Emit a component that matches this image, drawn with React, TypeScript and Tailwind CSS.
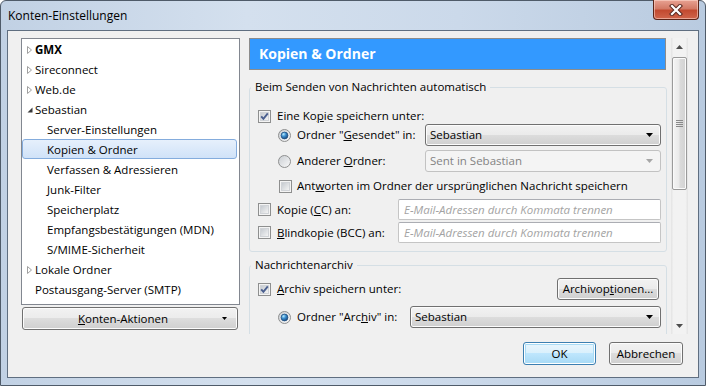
const btn =
  "flex items-center justify-center rounded-[3px] border border-[#707070] bg-[linear-gradient(#f2f2f2,#ebebeb_50%,#dddddd_50%,#cfcfcf)] shadow-[inset_0_0_0_1px_#fcfcfc]";

function Check({ checked = false }: { checked?: boolean }) {
  return (
    <svg width="13" height="13" viewBox="0 0 13 13" className="shrink-0">
      <defs>
        <linearGradient id="cbfill" x1="0" y1="0" x2="1" y2="1">
          <stop offset="0" stopColor="#c3c8ce" />
          <stop offset="1" stopColor="#f6f6f6" />
        </linearGradient>
      </defs>
      <rect x="0.5" y="0.5" width="12" height="12" fill="#f4f4f4" stroke="#8e8f8f" />
      <rect x="2.5" y="2.5" width="8" height="8" fill="url(#cbfill)" stroke="#d0d3d7" />
      {checked && (
        <path d="M3.2 6.3 L5.4 8.8 L9.8 3.4" fill="none" stroke="#4a5f8f" strokeWidth="1.9" />
      )}
    </svg>
  );
}

function Radio({ checked = false }: { checked?: boolean }) {
  return (
    <svg width="13" height="13" viewBox="0 0 13 13" className="shrink-0">
      <defs>
        <linearGradient id="rbfill" x1="0" y1="0" x2="1" y2="1">
          <stop offset="0" stopColor="#c8ccd1" />
          <stop offset="1" stopColor="#fafafa" />
        </linearGradient>
        <radialGradient id="rbdot" cx="0.35" cy="0.3" r="0.75">
          <stop offset="0" stopColor="#b8ecff" />
          <stop offset="0.45" stopColor="#3b8fd0" />
          <stop offset="1" stopColor="#17457a" />
        </radialGradient>
      </defs>
      <circle cx="6.5" cy="6.5" r="6" fill="url(#rbfill)" stroke="#8e8f8f" />
      {checked && <circle cx="6.5" cy="6.5" r="3.4" fill="url(#rbdot)" stroke="#1f4f80" strokeWidth="0.8" />}
    </svg>
  );
}

function Arrow({ color = "#000" }: { color?: string }) {
  return (
    <svg width="7" height="4" viewBox="0 0 7 4" className="shrink-0">
      <path d="M0 0 H7 L3.5 4 Z" fill={color} />
    </svg>
  );
}

function Combo({ value, className, disabled = false }: { value: string; className: string; disabled?: boolean }) {
  return (
    <div
      className={
        disabled
          ? `ml-auto flex h-[22px] shrink-0 items-center justify-between rounded-[3px] border border-[#c2c2c2] bg-[#f4f4f4] pl-[4px] pr-[7px] text-[#838383] ${className}`
          : `ml-auto flex h-[22px] shrink-0 items-center justify-between rounded-[3px] border border-[#707070] bg-[linear-gradient(#f2f2f2,#ebebeb_50%,#dddddd_50%,#cfcfcf)] pl-[4px] pr-[7px] shadow-[inset_0_0_0_1px_#fcfcfc] ${className}`
      }
    >
      <span className="whitespace-nowrap">{value}</span>
      <Arrow color={disabled ? "#a6a6a6" : "#000"} />
    </div>
  );
}

function TextBox() {
  return (
    <input
      placeholder="E-Mail-Adressen durch Kommata trennen"
      className="ml-auto h-[21px] w-[263px] shrink-0 rounded-[2px] border border-[#c5c5c5] border-t-[#abadb3] bg-white px-[5px] text-[11.5px] outline-none placeholder:italic placeholder:text-[#a3a3a3]"
    />
  );
}

function Tri({ open = false }: { open?: boolean }) {
  return (
    <svg width="10" height="16" viewBox="0 0 10 16" className="shrink-0">
      {open ? (
        <path d="M7.5 5.5 L7.5 10.5 L2.5 10.5 Z" fill="#3a3a3a" />
      ) : (
        <path d="M2.5 4.5 L6.5 8 L2.5 11.5 Z" fill="#fff" stroke="#a0a0a0" />
      )}
    </svg>
  );
}

type Item = { label: string; level: 0 | 1; tri?: "open" | "closed"; bold?: boolean; selected?: boolean };

const tree: Item[] = [
  { label: "GMX", level: 0, tri: "closed", bold: true },
  { label: "Sireconnect", level: 0, tri: "closed" },
  { label: "Web.de", level: 0, tri: "closed" },
  { label: "Sebastian", level: 0, tri: "open" },
  { label: "Server-Einstellungen", level: 1 },
  { label: "Kopien & Ordner", level: 1, selected: true },
  { label: "Verfassen & Adressieren", level: 1 },
  { label: "Junk-Filter", level: 1 },
  { label: "Speicherplatz", level: 1 },
  { label: "Empfangsbestätigungen (MDN)", level: 1 },
  { label: "S/MIME-Sicherheit", level: 1 },
  { label: "Lokale Ordner", level: 0, tri: "closed" },
  { label: "Postausgang-Server (SMTP)", level: 0 },
];

function CloseButton() {
  return (
    <div className="mr-[6px] -mt-px flex h-[20px] w-[46px] items-center justify-center rounded-b-[4px] border border-t-0 border-[#5b2418] bg-[linear-gradient(#e8a293,#d37a66_45%,#c24a30_55%,#d0654b)] shadow-[inset_0_0_0_1px_rgba(255,220,210,0.55)]">
      <svg width="14" height="12" viewBox="0 0 14 12">
        <path d="M3 2 L11 10 M11 2 L3 10" stroke="#5a2a22" strokeWidth="4.2" strokeLinecap="square" />
        <path d="M3 2 L11 10 M11 2 L3 10" stroke="#fff" strokeWidth="2.2" strokeLinecap="square" />
      </svg>
    </div>
  );
}

function Scrollbar() {
  return (
    <div className="ml-[4px] flex h-[296px] w-[17px] flex-col bg-[linear-gradient(90deg,#e3e3e3,#f2f2f2_15%,#f2f2f2_85%,#e3e3e3)]">
      <div className="flex h-[17px] items-center justify-center">
        <svg width="7" height="4" viewBox="0 0 7 4">
          <path d="M0 4 H7 L3.5 0 Z" fill="#4d4d4d" />
        </svg>
      </div>
      <div className="mx-[1px] mt-[2px] flex h-[133px] items-center justify-center rounded-[2px] border border-[#9a9a9a] bg-[linear-gradient(90deg,#f4f4f4,#eaeaea_45%,#dadada_55%,#d2d2d2)] shadow-[inset_0_0_0_1px_#fafafa]">
        <svg width="7" height="7" viewBox="0 0 7 7">
          <path d="M0 0.5 H7 M0 2.5 H7 M0 4.5 H7 M0 6.5 H7" stroke="#8a8a8a" strokeWidth="1" />
        </svg>
      </div>
      <div className="flex-1" />
      <div className="flex h-[17px] items-center justify-center">
        <Arrow color="#4d4d4d" />
      </div>
    </div>
  );
}

export default function App() {
  return (
    <div className="h-[386px] w-[706px] bg-white font-['Segoe_UI','Open_Sans',sans-serif] text-[11.5px] leading-none text-black">
      <div className="flex h-full w-full flex-col rounded-t-[6px] border border-[#4f5b69] bg-[linear-gradient(90deg,#c1d1e4,#d4e0ee_35%,#cbd9ea_65%,#b9cbe0)]">
        <div className="flex h-[29px] items-start justify-between">
          <span className="pl-[7px] pt-[9px] text-[12px]">Konten-Einstellungen</span>
          <CloseButton />
        </div>

        <div className="flex flex-1 px-[6px] pb-[7px]">
          <div className="flex flex-1 border border-[#5f6e80] bg-[#f0f0f0]">
            {/* left: account tree */}
            <div className="flex w-[232px] flex-col pl-[13px] pt-[7px]">
              <div className="h-[267px] w-[219px] border border-[#828790] bg-white">
                {tree.map((it) => (
                  <div
                    key={it.label}
                    className={`mr-[2px] flex h-[20px] items-center rounded-[3px] border pt-[2px] ${
                      it.selected
                        ? "border-[#84acdd] bg-[linear-gradient(#e6f0fc,#d0e2f8)]"
                        : "border-transparent"
                    } ${it.level === 0 ? "pl-[2px]" : "pl-[24px]"} ${it.bold ? "font-bold" : ""}`}
                  >
                    {it.level === 0 &&
                      (it.tri ? <Tri open={it.tri === "open"} /> : <span className="w-[10px] shrink-0" />)}
                    <span className="whitespace-nowrap">{it.label}</span>
                  </div>
                ))}
              </div>
              <div className={`${btn} relative ml-px mt-[2px] h-[23px] w-[216px] pr-[14px]`}>
                <span>
                  <u>K</u>onten-Aktionen
                </span>
                <span className="absolute right-[10px] top-[9px] flex">
                  <svg width="5" height="3" viewBox="0 0 5 3">
                    <path d="M0 0 H5 L2.5 3 Z" fill="#000" />
                  </svg>
                </span>
              </div>
            </div>

            {/* right: settings page */}
            <div className="flex flex-1 flex-col pl-[9px] pt-[7px]">
              <div className="flex h-[296px]">
                <div className="w-[418px] overflow-hidden">
                  <div className="flex h-[32px] w-[417px] items-center border border-[#8c8c8c] bg-[#3399ff] pl-[9px] text-[14px] font-bold text-white">
                    Kopien &amp; Ordner
                  </div>

                  <fieldset className="mt-[9px] rounded-[3px] border border-[#d5dfe5]">
                    <legend className="ml-px h-[16px] px-[4px] leading-[16px]">
                      Beim Senden von Nachrichten automatisch
                    </legend>
                    <div className="pb-[8px] pl-[8px] pr-[5px] pt-[13px]">
                      <div className="flex h-[16px] items-center gap-[6px]">
                        <Check checked />
                        <span className="whitespace-nowrap">
                          Eine Ko<u>p</u>ie speichern unter:
                        </span>
                      </div>
                      <div className="flex h-[22px] items-center gap-[6px] pl-[20px]">
                        <Radio checked />
                        <span className="whitespace-nowrap">
                          Ordner "<u>G</u>esendet" in:
                        </span>
                        <Combo value="Sebastian" className="w-[236px]" />
                      </div>
                      <div className="mt-[4px] flex h-[22px] items-center gap-[6px] pl-[20px]">
                        <Radio />
                        <span className="whitespace-nowrap">
                          Anderer <u>O</u>rdner:
                        </span>
                        <Combo value="Sent in Sebastian" className="w-[236px]" disabled />
                      </div>
                      <div className="mt-[6px] flex h-[16px] items-center gap-[5px] pl-[21px]">
                        <Check />
                        <span className="whitespace-nowrap">
                          Ant<u>w</u>orten im Ordner der ursprünglichen Nachricht speichern
                        </span>
                      </div>
                      <div className="mt-[5px] flex h-[21px] items-center gap-[6px]">
                        <Check />
                        <span className="whitespace-nowrap">
                          Kopie (<u>C</u>C) an:
                        </span>
                        <TextBox />
                      </div>
                      <div className="mt-[2px] flex h-[21px] items-center gap-[6px]">
                        <Check />
                        <span className="whitespace-nowrap">
                          <u>B</u>lindkopie (BCC) an:
                        </span>
                        <TextBox />
                      </div>
                    </div>
                  </fieldset>

                  <fieldset className="mt-[5px] rounded-[3px] border border-[#d5dfe5]">
                    <legend className="ml-px h-[16px] px-[4px] leading-[16px]">Nachrichtenarchiv</legend>
                    <div className="pb-[20px] pl-[8px] pr-[5px] pt-[5px]">
                      <div className="flex h-[22px] items-center gap-[6px]">
                        <Check checked />
                        <span className="whitespace-nowrap">
                          <u>A</u>rchiv speichern unter:
                        </span>
                        <div className={`${btn} ml-auto mr-[2px] h-[22px] w-[102px] shrink-0`}>
                          <span className="whitespace-nowrap">
                            Archivop<u>t</u>ionen...
                          </span>
                        </div>
                      </div>
                      <div className="mt-[6px] flex h-[22px] items-center gap-[6px] pl-[20px]">
                        <Radio checked />
                        <span className="whitespace-nowrap">
                          Ordner "Arc<u>h</u>iv" in:
                        </span>
                        <Combo value="Sebastian" className="w-[251px]" />
                      </div>
                    </div>
                  </fieldset>
                </div>
                <Scrollbar />
              </div>

              <div className="mt-[8px] flex justify-end gap-[13px] pr-[15px]">
                <div className="flex h-[23px] w-[73px] items-center justify-center rounded-[3px] border border-[#3c7fb1] bg-[linear-gradient(#eaf6fd,#d9f0fc_50%,#bee6fd_50%,#a7d9f5)] shadow-[inset_0_0_0_1px_#ffffff,inset_0_0_0_2px_#a9dcf6]">
                  OK
                </div>
                <div className={`${btn} h-[23px] w-[74px]`}>Abbrechen</div>
              </div>
            </div>
          </div>
        </div>
      </div>
    </div>
  );
}
